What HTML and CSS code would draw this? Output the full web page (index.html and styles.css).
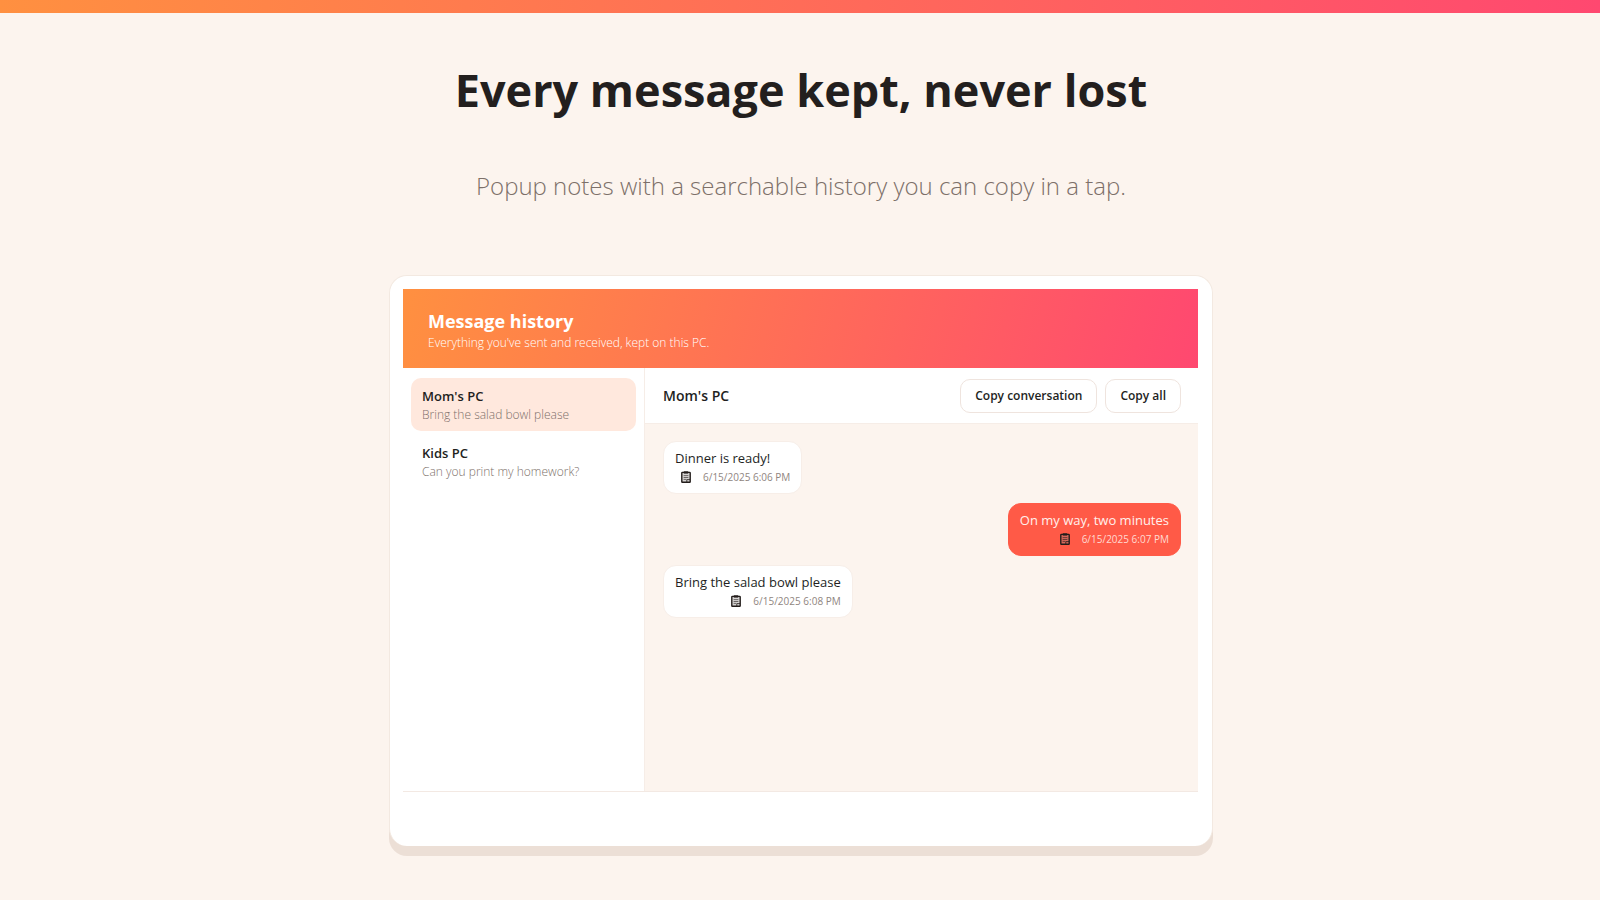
FILE: index.html
```html
<!DOCTYPE html>
<html lang="en">
<head>
<meta charset="utf-8">
<meta name="viewport" content="width=device-width, initial-scale=1">
<title>Every message kept, never lost</title>
<link rel="stylesheet" href="styles.css">
</head>
<body>
<svg width="0" height="0" class="defs" aria-hidden="true">
  <symbol id="clipboard" viewBox="0 0 10 12">
    <rect x="0.8" y="1.4" width="8.4" height="9.9" rx="0.5" fill="#8a8380" fill-opacity="0.35" stroke="#231d1b" stroke-width="1.4"/>
    <rect x="2.8" y="0.3" width="4.4" height="2.3" fill="#231d1b"/>
    <path d="M2.6 4.6h4.8M2.6 6.5h4.8M2.6 8.4h2.6" stroke="#231d1b" stroke-width="0.6"/>
    <path d="M5.8 11.2V8.6h3.2" fill="none" stroke="#231d1b" stroke-width="0.8"/>
  </symbol>
</svg>
<div class="stripe"></div>
<main class="page">
  <h1 class="title">Every message kept, never lost</h1>
  <p class="subtitle">Popup notes with a searchable history you can copy in a tap.</p>
  <section class="card">
    <header class="banner">
      <h2 class="banner-title">Message history</h2>
      <p class="banner-text">Everything you've sent and received, kept on this PC.</p>
    </header>
    <div class="app">
      <nav class="contacts">
        <button type="button" class="contact contact-active">
          <span class="contact-name">Mom's PC</span>
          <span class="contact-last">Bring the salad bowl please</span>
        </button>
        <button type="button" class="contact">
          <span class="contact-name">Kids PC</span>
          <span class="contact-last">Can you print my homework?</span>
        </button>
      </nav>
      <div class="conversation">
        <div class="toolbar">
          <h3 class="toolbar-name">Mom's PC</h3>
          <button type="button" class="action">Copy conversation</button>
          <button type="button" class="action">Copy all</button>
        </div>
        <div class="messages">
          <article class="bubble">
            <p class="bubble-text">Dinner is ready!</p>
            <div class="meta"><button type="button" class="copy" aria-label="Copy message"><svg class="icon"><use href="#clipboard"/></svg></button><time>6/15/2025 6:06 PM</time></div>
          </article>
          <article class="bubble bubble-sent">
            <p class="bubble-text">On my way, two minutes</p>
            <div class="meta"><button type="button" class="copy" aria-label="Copy message"><svg class="icon"><use href="#clipboard"/></svg></button><time>6/15/2025 6:07 PM</time></div>
          </article>
          <article class="bubble">
            <p class="bubble-text">Bring the salad bowl please</p>
            <div class="meta"><button type="button" class="copy" aria-label="Copy message"><svg class="icon"><use href="#clipboard"/></svg></button><time>6/15/2025 6:08 PM</time></div>
          </article>
        </div>
      </div>
    </div>
  </section>
</main>
</body>
</html>
```

FILE: styles.css
```css
* { box-sizing: border-box; }
body {
  margin: 0;
  background: #fcf4ee;
  color: #231f1e;
  font-family: "Open Sans", "Noto Sans", sans-serif;
}
h1, h2, h3, p { margin: 0; }
button { font: inherit; color: inherit; cursor: pointer; }
.defs { display: none; }
.stripe { height: 13px; background: linear-gradient(90deg, #ff9040, #ff4870); }
.page {
  display: flex;
  flex-direction: column;
  align-items: center;
  padding: 43px 24px 50px 26px;
}
.title { font-size: 45px; line-height: 68px; font-weight: 700; text-align: center; }
.subtitle {
  margin-top: 44px;
  font-size: 24px;
  line-height: 36px;
  font-weight: 300;
  color: #7d7069;
  text-align: center;
}
.card {
  width: 100%;
  max-width: 824px;
  margin-top: 71px;
  padding: 13px 14px 54px 13px;
  border: 1px solid #f3e9e1;
  border-bottom: 0;
  border-radius: 18px;
  background: #fff;
  box-shadow: 0 10px 0 #ecdfd6;
}
.banner {
  padding: 19px 25px 16px;
  background: linear-gradient(105deg, #ff9040, #ff4870);
  color: #fff;
}
.banner-title { font-size: 18px; line-height: 26px; font-weight: 700; }
.banner-text { font-size: 12px; line-height: 18px; font-weight: 300; color: #fff; }
.app { display: flex; min-height: 424px; border-bottom: 1px solid #f3e9e3; }
.contacts {
  flex: 0 0 242px;
  display: flex;
  flex-direction: column;
  gap: 4px;
  padding: 10px 8px;
  border-right: 1px solid #f6ede7;
}
.contact {
  display: flex;
  flex-direction: column;
  padding: 9px 11px 7px;
  border: 0;
  border-radius: 10px;
  background: none;
  text-align: left;
}
.contact-active { background: #ffe8dd; }
.contact-name { font-size: 13px; line-height: 18px; font-weight: 600; }
.contact-last { font-size: 12px; line-height: 19px; font-weight: 300; color: #7d706a; }
.conversation { flex: 1; display: flex; flex-direction: column; min-width: 0; }
.toolbar {
  display: flex;
  align-items: center;
  gap: 8px;
  padding: 11px 17px 10px 18px;
  border-bottom: 1px solid #f6ede7;
}
.toolbar-name { flex: 1; font-size: 14px; line-height: 20px; font-weight: 600; }
.action {
  padding: 6px 14px;
  border: 1px solid #efe4de;
  border-radius: 10px;
  background: #fff;
  font-size: 12px;
  line-height: 20px;
  font-weight: 600;
}
.messages {
  flex: 1;
  display: flex;
  flex-direction: column;
  align-items: flex-start;
  gap: 9px;
  padding: 17px 17px 17px 18px;
  background: #fcf4ee;
}
.bubble {
  padding: 6px 11px 7px;
  border: 1px solid #f7eee8;
  border-radius: 13px;
  background: #fff;
}
.bubble-sent { align-self: flex-end; border-color: #ff5a47; background: #ff5a47; color: #fff0ec; }
.bubble-text { font-size: 13px; line-height: 20px; }
.meta {
  display: flex;
  align-items: center;
  justify-content: flex-end;
  gap: 6px;
  font-size: 10px;
  line-height: 18px;
  color: #8f8580;
}
.bubble-sent .meta { color: #ffd9d1; }
.copy { display: flex; padding: 0 6px; border: 0; background: none; }
.icon { width: 10px; height: 12px; }
```
